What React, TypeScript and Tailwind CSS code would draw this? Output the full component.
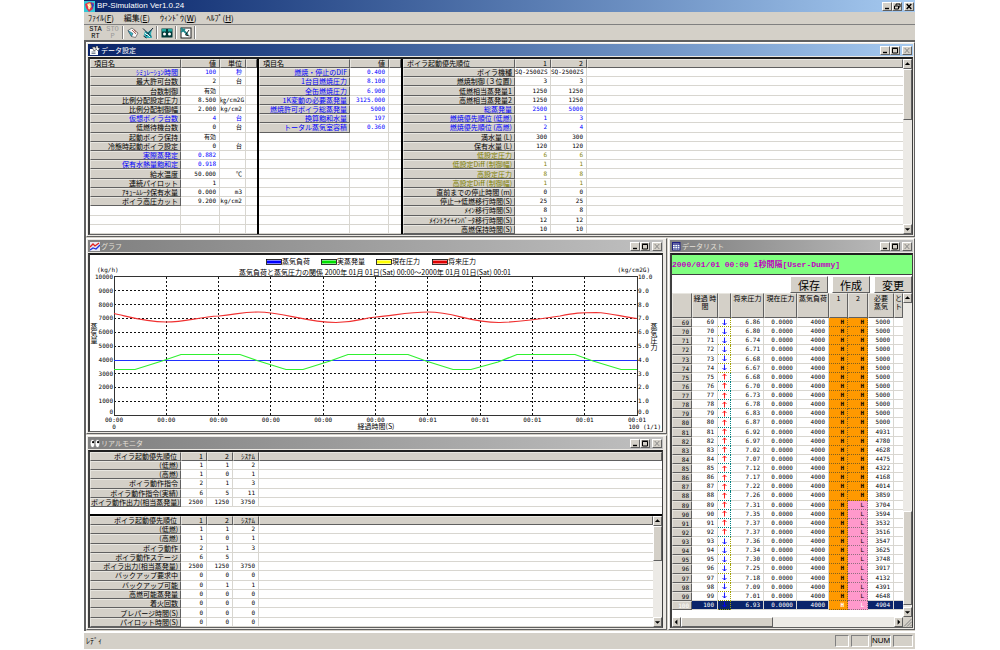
import React from "react";

type Tone = "black" | "blue" | "olive";
type Row = { label: string; values: string[]; tone?: Tone };

const toneClass: Record<Tone, string> = {
  black: "text-black",
  blue: "text-[#0000ff]",
  olive: "text-[#808000]",
};

const settings: Row[] = [
  { label: "ｼﾐｭﾚｰｼｮﾝ時間", values: ["100", "秒"], tone: "blue" },
  { label: "最大許可台数", values: ["2", "台"] },
  { label: "台数制御", values: ["有効", ""] },
  { label: "比例分配設定圧力", values: ["8.500", "㎏/cm2G"] },
  { label: "比例分配制御幅", values: ["2.000", "kg/cm2"] },
  { label: "仮想ボイラ台数", values: ["4", "台"], tone: "blue" },
  { label: "低燃待機台数", values: ["0", "台"] },
  { label: "起動ボイラ保持", values: ["有効", ""] },
  { label: "冷態時起動ボイラ設定", values: ["0", "台"] },
  { label: "実際蒸発定", values: ["0.882", ""], tone: "blue" },
  { label: "保有水熱量飽和定", values: ["0.918", ""], tone: "blue" },
  { label: "給水温度", values: ["50.000", "℃"] },
  { label: "連続パイロット", values: ["1", ""] },
  { label: "ｱｷｭｰﾑﾚｰﾀ保有水量", values: ["0.000", "m3"] },
  { label: "ボイラ高圧カット", values: ["9.200", "kg/cm2"] },
];

const derived: Row[] = [
  { label: "燃焼・停止のDIF", values: ["0.400"], tone: "blue" },
  { label: "1台目燃焼圧力", values: ["8.100"], tone: "blue" },
  { label: "全缶燃焼圧力", values: ["6.900"], tone: "blue" },
  { label: "1K変動の必要蒸発量", values: ["3125.000"], tone: "blue" },
  { label: "燃焼許可ボイラ総蒸発量", values: ["5000"], tone: "blue" },
  { label: "換算飽和水量", values: ["197"], tone: "blue" },
  { label: "トータル蒸気室容積", values: ["0.360"], tone: "blue" },
];

const boilers: Row[] = [
  { label: "ボイラ機種", values: ["SQ-2500ZS", "SQ-2500ZS"] },
  { label: "燃焼制御 (３位置)", values: ["3", "3"] },
  { label: "低燃相当蒸発量1", values: ["1250", "1250"] },
  { label: "高燃相当蒸発量2", values: ["1250", "1250"] },
  { label: "総蒸発量", values: ["2500", "5000"], tone: "blue" },
  { label: "燃焼優先順位 (低燃)", values: ["1", "3"], tone: "blue" },
  { label: "燃焼優先順位 (高燃)", values: ["2", "4"], tone: "blue" },
  { label: "満水量 (L)", values: ["300", "300"] },
  { label: "保有水量 (L)", values: ["120", "120"] },
  { label: "低設定圧力", values: ["6", "6"], tone: "olive" },
  { label: "低設定Diff (制御幅)", values: ["1", "1"], tone: "olive" },
  { label: "高設定圧力", values: ["8", "8"], tone: "olive" },
  { label: "高設定Diff (制御幅)", values: ["1", "1"], tone: "olive" },
  { label: "直前までの停止時間 (m)", values: ["0", "0"] },
  { label: "停止→低燃移行時間(S)", values: ["25", "25"] },
  { label: "ﾒｲﾝ移行時間(S)", values: ["8", "8"] },
  { label: "ﾒｲﾝﾄﾗｲ+ｲﾝﾊﾞｰﾀ移行時間(S)", values: ["12", "12"] },
  { label: "高燃保持時間(S)", values: ["10", "10"] },
];

const commands: Row[] = [
  { label: "(低燃)", values: ["1", "1", "2"] },
  { label: "(高燃)", values: ["1", "0", "1"] },
  { label: "ボイラ動作指令", values: ["2", "1", "3"] },
  { label: "ボイラ動作指令(実績)", values: ["6", "5", "11"] },
  { label: "ボイラ動作出力(相当蒸発量)", values: ["2500", "1250", "3750"] },
];

const monitor: Row[] = [
  { label: "(低燃)", values: ["1", "1", "2"] },
  { label: "(高燃)", values: ["1", "0", "1"] },
  { label: "ボイラ動作", values: ["2", "1", "3"] },
  { label: "ボイラ動作ステージ", values: ["6", "5", ""] },
  { label: "ボイラ出力(相当蒸発量)", values: ["2500", "1250", "3750"] },
  { label: "バックアップ要求中", values: ["0", "0", "0"] },
  { label: "バックアップ可能", values: ["0", "1", "1"] },
  { label: "高燃可能蒸発量", values: ["0", "0", "0"] },
  { label: "着火回数", values: ["0", "0", "0"] },
  { label: "プレパージ時間(S)", values: ["0", "0", "0"] },
  { label: "パイロット時間(S)", values: ["0", "0", "0"] },
];

const pressures =
  "6.86 6.80 6.74 6.71 6.68 6.67 6.68 6.70 6.73 6.78 6.83 6.87 6.92 6.97 7.02 7.07 7.12 7.17 7.22 7.26 7.31 7.35 7.37 7.37 7.36 7.34 7.30 7.25 7.18 7.09 7.01 6.93".split(" ");
const demands =
  "5000 5000 5000 5000 5000 5000 5000 5000 5000 5000 5000 5000 4931 4780 4628 4475 4322 4168 4014 3859 3704 3594 3532 3516 3547 3625 3748 3917 4132 4391 4648 4904".split(" ");
const samples = pressures.map((pressure, i) => {
  const second = 69 + i;
  return { second, pressure, demand: demands[i], rising: second >= 75 && second <= 92, low: second >= 89 };
});

const raised = "bg-[#d4d0c8] border border-t-white border-l-white border-r-[#606060] border-b-[#606060]";
const headCell = "bg-[#d4d0c8] border border-t-[#e8e6e0] border-l-[#e8e6e0] border-r-[#606060] border-b-[#606060] p-0 font-normal";
const valueCell = "border-r border-b border-[#d8d6d0] p-0 pr-[3px] text-right";
const mono = "font-[DejaVu_Sans_Mono,Noto_Sans_CJK_JP,monospace] text-[6px] leading-[8px]";

function WindowButtons({ restore = false, closable = false }: { restore?: boolean; closable?: boolean }) {
  return (
    <div className="flex items-center pr-px">
      <button aria-label="最小化" className={`flex h-[9px] w-[10px] items-center justify-center ${raised}`}>
        <svg viewBox="0 0 8 7" className="h-[7px] w-2"><path d="M2 5.5h4" stroke="#000" strokeWidth="1.4" /></svg>
      </button>
      <button aria-label={restore ? "元に戻す" : "最大化"} className={`flex h-[9px] w-[10px] items-center justify-center ${raised}`}>
        <svg viewBox="0 0 8 7" className="h-[7px] w-2" fill="none" stroke="#000">
          {restore ? <path d="M3 2.5V1h4v3H5.5M1.500 3h4v3h-4z" strokeWidth="1" /> : <path d="M1 1h6M1.500 1.500h5v4.500h-5z" strokeWidth="1" />}
        </svg>
      </button>
      <button aria-label="閉じる" disabled={!closable} className={`ml-0.5 flex h-[9px] w-[10px] items-center justify-center ${raised}`}>
        <svg viewBox="0 0 8 7" className="h-[7px] w-2"><path d="M1.700 1l4.600 5M6.300 1L1.700 6" stroke={closable ? "#000" : "#888"} strokeWidth={closable ? 1.4 : 1} /></svg>
      </button>
    </div>
  );
}

function ChildWindow({ title, icon, active = false, className = "", children }: { title: string; icon: React.ReactNode; active?: boolean; className?: string; children: React.ReactNode }) {
  return (
    <section className={`flex min-w-0 flex-col border border-t-white border-l-white border-r-[#606060] border-b-[#606060] bg-[#ece9e4] p-px ${className}`}>
      <header className={`flex h-3 shrink-0 items-center justify-between bg-linear-to-r ${active ? "from-[#0a246a] to-[#a6caf0] text-white" : "from-[#808080] to-[#c0c0c0] text-[#e4e0d8]"}`}>
        <h2 className="flex items-center gap-px pl-0.5 text-[7px] leading-[12px]">
          {icon}
          {title}
        </h2>
        <WindowButtons />
      </header>
      <div className="mt-px flex min-h-0 flex-1 flex-col border-t-2 border-r border-b border-l-2 border-t-[#202020] border-r-[#404040] border-b-[#606060] border-l-[#404040] bg-white">
        {children}
      </div>
    </section>
  );
}

function ArrowGlyph({ dir }: { dir: "up" | "down" | "left" | "right" }) {
  const d = { up: "M1 5l3-3 3 3z", down: "M1 3l3 3 3-3z", left: "M5 1L2 4l3 3z", right: "M3 1l3 3-3 3z" }[dir];
  return <svg viewBox="0 0 8 8" className="size-2"><path d={d} fill="#000" /></svg>;
}

function ScrollButton({ dir, label }: { dir: "up" | "down" | "left" | "right"; label: string }) {
  return (
    <button aria-label={label} className={`flex h-[10px] w-[9px] shrink-0 items-center justify-center ${raised}`}>
      <ArrowGlyph dir={dir} />
    </button>
  );
}

function VScroll({ before, thumb }: { before: string; thumb: string }) {
  return (
    <div className="flex w-[9px] shrink-0 flex-col bg-[#eceae6]">
      <ScrollButton dir="up" label="上へ" />
      <div className={before} />
      <div className={`${thumb} ${raised}`} />
      <div className="flex-1" />
      <ScrollButton dir="down" label="下へ" />
    </div>
  );
}

function Grid({ head, rows, widths, blanks = 0, headAlign = "text-left", className = "" }: { head: string[]; rows: Row[]; widths: string[]; blanks?: number; headAlign?: string; className?: string }) {
  const padded: (Row | null)[] = [...rows, ...Array<null>(blanks).fill(null)];
  return (
    <table className={`w-full table-fixed border-separate border-spacing-0 text-[7px] leading-[8px] whitespace-nowrap ${className}`}>
      <colgroup>
        {widths.map((w, i) => <col key={i} className={w} />)}
        <col />
      </colgroup>
      <thead>
        <tr className="h-[9px]">
          {head.map((h, i) => (
            <th key={i} scope="col" className={`${headCell} leading-[7px] ${i === 0 ? `${headAlign} px-[3px]` : "pr-[3px] text-right"}`}>{h}</th>
          ))}
          <th className={headCell} />
        </tr>
      </thead>
      <tbody>
        {padded.map((row, i) => (
          <tr key={i} className={toneClass[row?.tone ?? "black"]}>
            {row ? (
              <th scope="row" className={`${headCell} pr-0.5 text-right leading-[7px]`}>{row.label}</th>
            ) : (
              <td className={valueCell}>&nbsp;</td>
            )}
            {widths.slice(1).map((_, c) => (
              <td key={c} className={`${valueCell} ${mono}`}>{row?.values[c] ?? ""}</td>
            ))}
            <td className="border-b border-[#d8d6d0] p-0" />
          </tr>
        ))}
      </tbody>
    </table>
  );
}

function Chart() {
  const left = 24;
  const right = 547;
  const top = 22;
  const bottom = 160;
  const step = (right - left) / 10;
  const rise = (bottom - top) / 10;
  const tens = Array.from({ length: 11 }, (_, i) => i);
  const legend = [
    { x: 176, color: "#0000ff", name: "蒸気負荷" },
    { x: 231, color: "#00e000", name: "実蒸発量" },
    { x: 286, color: "#ffff00", name: "現在圧力" },
    { x: 342, color: "#e00000", name: "将来圧力" },
  ];
  return (
    <svg viewBox="0 0 572 176" className="h-full w-full" role="img" aria-label="グラフ" fontSize="7">
      {legend.map((item) => (
        <g key={item.name}>
          <rect x={item.x + 0.5} y="4.5" width="15" height="5" fill="#fff" stroke="#000" strokeWidth="0.8" />
          <rect x={item.x + 1} y="5.5" width="14" height="3" fill={item.color} />
          <text x={item.x + 16} y="9">{item.name}</text>
        </g>
      ))}
      <text x="285" y="20" textAnchor="middle">蒸気負荷と蒸気圧力の関係 2000年 01月 01日(Sat) 00:00～2000年 01月 01日(Sat) 00:01</text>
      <g className="font-[DejaVu_Sans_Mono,monospace]" fontSize="6">
        <text x="7" y="17">(kg/h)</text>
        <text x="560" y="17" textAnchor="end">(kg/cm2G)</text>
      </g>
      {/* The 4000 line is left to the steam load series, which lies on it. */}
      <g stroke="#111" strokeWidth="1" strokeDasharray="2 2" shapeRendering="crispEdges">
        {tens.slice(1, 10).map((i) => (
          <g key={i}>
            <path d={`M${left + i * step} ${top}V${bottom}`} />
            {i !== 6 && <path d={`M${left} ${top + i * rise}H${right}`} />}
          </g>
        ))}
      </g>
      <rect x={left + 0.5} y={top - 0.5} width={right - left} height={bottom - top + 1} fill="none" stroke="#333" />
      <g className="font-[DejaVu_Sans_Mono,monospace]" fontSize="6">
        {tens.map((i) => {
          const y = Math.min(bottom - i * rise + 2, bottom - 1);
          return (
            <g key={i}>
              <text x={left - 1} y={y} textAnchor="end">{i * 1000}</text>
              <text x={right + 1} y={y}>{i}.0</text>
              <text x={left + i * step} y="167" textAnchor="middle">{i < 6 ? "00:00" : "00:01"}</text>
            </g>
          );
        })}
        <text x={left} y="174" textAnchor="middle">0</text>
        <text x="571" y="174" textAnchor="end">100 (1/1)</text>
      </g>
      <text x="286" y="174" textAnchor="middle">経過時間(S)</text>
      <text x="4" y="68" className="[writing-mode:vertical-rl]">蒸気量</text>
      <text x="564" y="68" className="[writing-mode:vertical-rl]">蒸気圧力</text>
      <path d={`M${left} 105.500H${right}`} stroke="#2030ff" fill="none" />
      <path d="M24 114.500H45L72 106L91 99.500H150L167 105.500L196 114.500H213L240 106L258 99.500H318L336 106L363 114.500H381L408 107L427 99.500H485L503 106L531 114.500H547" stroke="#30f030" strokeWidth="1.2" fill="none" />
      <path d="M24 58.500C40 62 55 67 76 67C96 67 108 62 129 61C148 59 153 57 168 57C193 57 215 67 246 67.500C268 67 272 63 286 62C306 60 320 57 338 57C365 57 380 68 410 67.500C430 67 450 64 470 61C485 58 490 57.500 506 57.500C522 58 532 62 547 63.500" stroke="#f03030" strokeWidth="1.2" fill="none" />
    </svg>
  );
}

function DataList() {
  const th = `${headCell} align-top leading-[8px]`;
  return (
    <div className="flex min-h-0 flex-1">
      <div className="min-w-0 flex-1 overflow-hidden">
        <table className="h-[317px] w-full table-fixed border-separate border-spacing-0 text-right text-[7px] leading-[8px]">
          <colgroup>
            <col className="w-[20px]" /><col className="w-[26px]" /><col className="w-[13px]" /><col className="w-[33px]" /><col className="w-[33px]" />
            <col className="w-[32px]" /><col className="w-[19px]" /><col className="w-[20px]" /><col className="w-[26px]" /><col />
          </colgroup>
          <thead>
            <tr className="h-[25px] text-center">
              <th className={th} />
              <th className={th}>経過 時<br />間</th>
              <th className={th} />
              <th className={`${th} whitespace-nowrap`}>将来圧力</th>
              <th className={`${th} whitespace-nowrap`}>現在圧力</th>
              <th className={`${th} whitespace-nowrap`}>蒸気負荷</th>
              <th className={th}>1</th>
              <th className={th}>2</th>
              <th className={th}>必要<br />蒸気</th>
              <th className={th}>と<br />ト</th>
            </tr>
          </thead>
          <tbody className={mono}>
            {samples.map((s) => {
              const current = s.second === 100;
              return (
                <tr key={s.second} className={current ? "bg-[#0a246a] text-white" : "text-black"}>
                  <th scope="row" className={`${headCell} pr-0.5 text-right leading-[7px]`}>{s.second}</th>
                  <td className={valueCell}>{s.second}</td>
                  <td className={`border-r border-b border-dotted p-0 text-center ${s.rising ? "border-[#008080] text-[#ff0000]" : "border-[#a0a000] text-[#0000ff]"}`}>
                    <svg viewBox="0 0 5 7" className="mx-auto h-[7px] w-[5px]" role="img" aria-label={s.rising ? "上昇" : "下降"} fill="none" stroke="currentColor">
                      <path d={s.rising ? "M2.500 6.500V.8M.5 3l2-2 2 2" : "M2.500 .5v5.500M.5 4l2 2 2-2"} strokeWidth=".9" />
                    </svg>
                  </td>
                  <td className={valueCell}>{s.pressure}</td>
                  <td className={valueCell}>0.0000</td>
                  <td className={valueCell}>4000</td>
                  <td className="border-r border-b border-dotted border-[#806020] bg-[#ff9900] p-0 pr-[3px] font-bold">H</td>
                  <td className={`border-r border-b border-dotted p-0 pr-[3px] ${s.low ? "border-[#907080] bg-[#ff99cc]" : "border-[#806020] bg-[#ff9900] font-bold"}`}>{s.low ? "L" : "H"}</td>
                  <td className={valueCell}>{s.demand}</td>
                  <td className="border-b border-[#d8d6d0] p-0" />
                </tr>
              );
            })}
          </tbody>
        </table>
      </div>
      <VScroll before="h-[208px]" thumb="h-[94px]" />
    </div>
  );
}

const icons = {
  app: (
    <svg viewBox="0 0 11 11" className="size-[11px]"><rect width="11" height="11" fill="#30c8d8" /><path d="M1 3l4-2 5 1-1 6-4 3-3-4z" fill="#e03050" /><path d="M3 3l3-1 2 3-3 4z" fill="#ffd860" /><path d="M7 1l3 3-2 4z" fill="#3040c0" /><path d="M4 4l2 2M5 3v5" stroke="#fff" strokeWidth=".8" /></svg>
  ),
  settings: (
    <svg viewBox="0 0 10 9" className="h-[9px] w-[10px]"><path d="M0 3h8v6H0z" fill="#fff" /><path d="M2 1h3l2 2-3 2z" fill="#e8e8e8" stroke="#333" strokeWidth=".6" /><path d="M6 0h2v2h2L8 5 6 3z" fill="#fff" stroke="#222" strokeWidth=".5" /><path d="M1.500 6h4M1.500 7.500h4" stroke="#456" strokeWidth=".7" /></svg>
  ),
  graph: (
    <svg viewBox="0 0 10 9" className="h-[9px] w-[10px]"><rect width="10" height="9" fill="#e8e8f0" /><path d="M0 5l3-3 2 2 4-3" stroke="#e02020" strokeWidth="1.300" fill="none" /><path d="M0 8l3-2 3 1 4-4" stroke="#2030e0" strokeWidth="1.300" fill="none" /></svg>
  ),
  eyes: (
    <svg viewBox="0 0 10 9" className="h-[9px] w-[10px]"><ellipse cx="2.500" cy="4.500" rx="2.300" ry="4" fill="#fff" stroke="#444" strokeWidth=".4" /><ellipse cx="7.500" cy="4.500" rx="2.300" ry="4" fill="#fff" stroke="#444" strokeWidth=".4" /><circle cx="3.100" cy="3.200" r="1.100" /><circle cx="8.100" cy="3.200" r="1.100" /></svg>
  ),
  list: (
    <svg viewBox="0 0 9 9" className="size-[9px]"><rect x=".5" y=".5" width="7.500" height="7.500" fill="#fff" stroke="#202080" /><path d="M1 2h7" stroke="#202080" strokeWidth="1.400" /><path d="M3 2v6M5.500 2v6M1 4.500h7M1 6.500h7" stroke="#4050a0" strokeWidth=".6" /></svg>
  ),
};

function Separator() {
  return <div className="h-[13px] w-0.5 border-r border-l border-r-white border-l-[#808080]" />;
}

function Toolbar() {
  const button = "flex size-[13px] items-center justify-center";
  const label = "w-[15px] text-center font-[Liberation_Mono,monospace] text-[7px] leading-[7px]";
  return (
    <div className="flex h-4 shrink-0 items-center gap-0.5 border-t border-[#808080] bg-[#d4d0c8] pl-1" role="toolbar">
      <button className={label}>STA<br />RT</button>
      <button disabled className={`${label} text-[#989898]`}>STO<br />P</button>
      <Separator />
      <button aria-label="読み込み" className={button}>
        <svg viewBox="0 0 12 12" className="size-3"><path d="M1 3.500l4-2.500 6 5-2.500 4.500-4-1z" fill="#f8f8f8" stroke="#555" strokeWidth=".7" /><path d="M1 3.500l3.500 6 1.500-3z" fill="#38b8c0" stroke="#246" strokeWidth=".5" /><path d="M5 3l4 4M7 2.500l2 3" stroke="#a04030" strokeWidth=".8" /></svg>
      </button>
      <button aria-label="設定" className={button}>
        <svg viewBox="0 0 12 12" className="size-3"><path d="M3 4l3 1 4-3-1 5 1 4H4L2 8z" fill="#30b0b8" /><path d="M1 1.500l8 8M11 1L4 9M1.500 9l3 2" stroke="#123" strokeWidth="1" /><path d="M5 7l3 3M3 6l2 2" stroke="#fff" strokeWidth=".9" /></svg>
      </button>
      <Separator />
      <button aria-label="モニタ" className={button}>
        <svg viewBox="0 0 12 12" className="size-3"><rect x=".5" y="1.500" width="11" height="9" fill="#003838" /><path d="M1 2h4v2.500H1zM7 2h4v2.500H7z" fill="#20a8a0" /><circle cx="3.500" cy="7" r="1.500" fill="#fff" /><circle cx="8.500" cy="7" r="1.500" fill="#fff" /></svg>
      </button>
      <Separator />
      <button aria-label="グラフ設定" className={button}>
        <svg viewBox="0 0 12 12" className="size-3"><rect x="1" y="1" width="10" height="10" fill="#fff" stroke="#222" /><path d="M1 1l7 7M1 5l4-3" stroke="#20888c" strokeWidth="1.800" /><path d="M9 3L5.500 8l4 1" stroke="#111" strokeWidth=".9" fill="none" /></svg>
      </button>
      <Separator />
    </div>
  );
}

const menus = [
  { text: "ﾌｧｲﾙ", key: "F" },
  { text: "編集", key: "E" },
  { text: "ｳｨﾝﾄﾞｳ", key: "W" },
  { text: "ﾍﾙﾌﾟ", key: "H" },
];

export default function App() {
  return (
    <div className="min-h-screen bg-white pr-[85px] pl-[84px] font-[Noto_Sans_CJK_JP,sans-serif] text-black">
      <main className="flex flex-col bg-[#d4d0c8]">
        <header className="flex h-3 items-center justify-between bg-linear-to-r from-[#0a246a] to-[#a6caf0] text-white">
          <h1 className="flex items-center gap-0.5 text-[8px] leading-[12px]">{icons.app}<span className="font-[Liberation_Sans,sans-serif]">BP-Simulation Ver1.0.24</span></h1>
          <WindowButtons restore closable />
        </header>
        <nav className="flex h-3 items-center gap-[10px] pl-1 text-[8px] leading-[12px]">
          {menus.map((m) => (
            <button key={m.key} className="whitespace-nowrap">{m.text}(<span className="underline">{m.key}</span>)</button>
          ))}
        </nav>
        <Toolbar />
        <div className="flex flex-col gap-px border-t-2 border-l-2 border-[#606060] bg-[#d4d0c8] pb-px">
          <ChildWindow title="データ設定" icon={icons.settings} active className="h-[195px]">
            <div className="flex min-h-0 flex-1">
              <div className="w-[167px] shrink-0">
                <Grid head={["項目名", "値", "単位"]} rows={settings} blanks={3} widths={["w-[91px]", "w-[39px]", "w-[26px]"]} className="h-full" />
              </div>
              <div className="w-[144px] shrink-0 border-l-2 border-black">
                <Grid head={["項目名", "値"]} rows={derived} blanks={11} widths={["w-[91px]", "w-[39px]"]} className="h-full" />
              </div>
              <div className="min-w-0 flex-1 border-l-2 border-black">
                <Grid head={["ボイラ起動優先順位", "1", "2"]} rows={boilers} widths={["w-[112px]", "w-[36px]", "w-[36px]"]} className="h-full" />
              </div>
              <VScroll before="h-0" thumb="h-[51px]" />
            </div>
          </ChildWindow>
          <div className="flex gap-px">
            <div className="flex min-w-0 flex-1 flex-col gap-px">
              <ChildWindow title="グラフ" icon={icons.graph} className="h-[196px] pr-[3px]">
                <Chart />
              </ChildWindow>
              <ChildWindow title="リアルモニタ" icon={icons.eyes} className="h-[195px] pr-[3px]">
                <div className="h-[62px] shrink-0">
                  <Grid head={["ボイラ起動優先順位", "1", "2", "ｼｽﾃﾑ"]} headAlign="text-right" rows={commands} widths={["w-[91px]", "w-[26px]", "w-[26px]", "w-[26px]"]} className="h-[55px]" />
                </div>
                <div className="flex min-h-0 flex-1 border-t-2 border-black">
                  <Grid head={["ボイラ起動優先順位", "1", "2", "ｼｽﾃﾑ"]} headAlign="text-right" rows={monitor} widths={["w-[91px]", "w-[26px]", "w-[26px]", "w-[26px]"]} className="h-full" />
                  <VScroll before="h-0" thumb="h-[35px]" />
                </div>
              </ChildWindow>
            </div>
            <ChildWindow title="データリスト" icon={icons.list} className="w-[247px] shrink-0">
              <p className="h-5 shrink-0 border-b border-[#404040] bg-[#80ff80] font-[Liberation_Mono,Noto_Sans_CJK_JP,monospace] text-[8px] leading-[19px] font-bold whitespace-nowrap text-[#c000c0]">2000/01/01 00:00 1秒間隔[User-Dummy]</p>
              <div className="flex h-[18px] shrink-0 justify-end gap-1 pt-px text-[11px] leading-[14px]">
                {["保存", "作成", "変更"].map((b) => (
                  <button key={b} className={`w-[38px] ${raised}`}>{b}</button>
                ))}
              </div>
              <DataList />
              <div className="flex h-[10px] shrink-0 bg-[#eceae6]">
                <ScrollButton dir="left" label="左へ" />
                <div className={`w-[92px] ${raised}`} />
                <div className="flex-1" />
                <ScrollButton dir="right" label="右へ" />
                <svg viewBox="0 0 9 9" className="h-[10px] w-[9px] bg-[#d4d0c8]"><path d="M1 9l8-8M4 9l5-5M7 9l2-2" stroke="#808080" /></svg>
              </div>
            </ChildWindow>
          </div>
        </div>
        <footer className="flex h-[18px] items-center gap-0.5 border-t-2 border-white px-0.5 text-[8px] leading-[12px]">
          <span className="flex-1">ﾚﾃﾞｨ</span>
          <span className="h-3 w-[14px] border border-t-[#808080] border-l-[#808080] border-r-white border-b-white" />
          <span className="h-3 w-[18px] border border-t-[#808080] border-l-[#808080] border-r-white border-b-white" />
          <span className="h-3 w-[20px] border border-t-[#808080] border-l-[#808080] border-r-white border-b-white text-center font-[Liberation_Sans,sans-serif] leading-[10px]">NUM</span>
          <span className="h-3 w-[20px] border border-t-[#808080] border-l-[#808080] border-r-white border-b-white" />
        </footer>
      </main>
    </div>
  );
}
